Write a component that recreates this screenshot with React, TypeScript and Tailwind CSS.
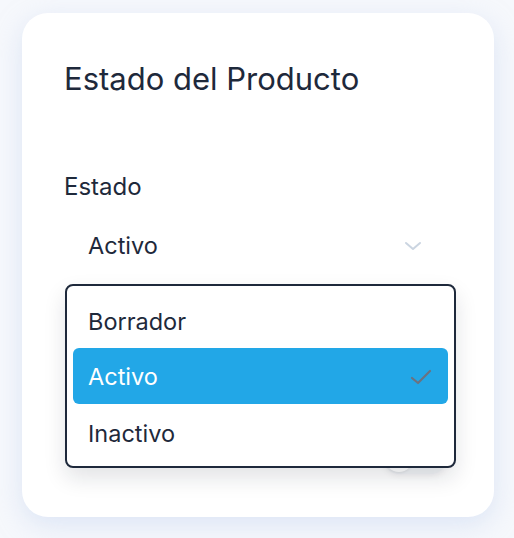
import React from "react";

export default function App() {
  return (
    <div className="min-h-[538px] w-[514px] bg-[#f6f8fc] pt-[13px] pl-[22px]" style={{ fontFamily: "Inter, 'Noto Sans', sans-serif" }}>
      <div className="relative w-[472px] h-[504px] rounded-[26px] bg-white shadow-[0_8px_26px_rgba(195,212,240,0.5)] px-[42px] pt-[46px]">
        <h1 className="text-[31px] leading-[40px] text-[#1e293b]">Estado del Producto</h1>
        <div className="mt-[72px] text-[24px] leading-[32px] font-normal text-[#1e293b]">Estado</div>
        <div className="relative mt-[21px]">
          <div className="flex items-center justify-between h-[44px] pl-[24px] pr-[30px]">
            <span className="text-[23.5px] leading-[32px] text-[#1e293b]">Activo</span>
            <svg width="18" height="10" viewBox="0 0 18 10" fill="none" stroke="#cbd5e1" strokeWidth="2" strokeLinecap="round" strokeLinejoin="round">
              <path d="M2 2l7 6 7-6" />
            </svg>
          </div>
          <div className="mt-[174px] ml-[319px] w-[64px] h-[32px] rounded-full bg-[#f0f2f5] p-[2px] shadow-[0_2px_6px_rgba(15,23,42,0.06)]">
            <div className="w-[28px] h-[28px] rounded-full bg-white shadow-[0_1px_3px_rgba(0,0,0,0.08)]" />
          </div>
          <div className="absolute left-[1px] top-[60px] w-[391px] rounded-[8px] border-2 border-[#1e293b] bg-white shadow-[0_10px_22px_rgba(15,23,42,0.12)] px-[6px] py-[6px] flex flex-col">
            <div className="h-[56px] flex items-center pl-[15px] pt-[3px] text-[23.5px] text-[#1e293b]">Borrador</div>
            <div className="h-[56px] flex items-center justify-between pl-[15px] pr-[16px] pt-[1px] rounded-[6px] bg-[#22a7e7] text-[23.5px] text-white">
              <span>Activo</span>
              <svg width="22" height="16" viewBox="0 0 22 16" fill="none" stroke="#6b7280" strokeWidth="2.2" strokeLinecap="round" strokeLinejoin="round">
                <path d="M2 9l6 5L20 2" />
              </svg>
            </div>
            <div className="h-[56px] flex items-center pl-[15px] pt-[3px] text-[23.5px] text-[#1e293b]">Inactivo</div>
          </div>
        </div>
      </div>
    </div>
  );
}
